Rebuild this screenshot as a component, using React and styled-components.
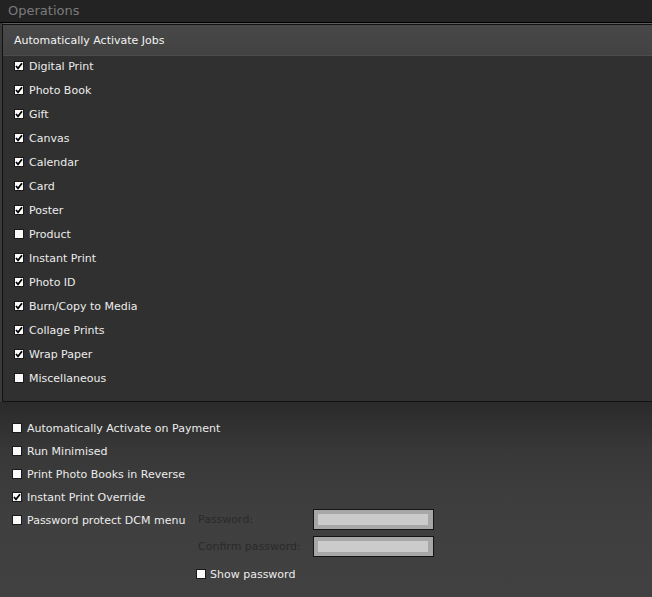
import React from "react";
import styled, { createGlobalStyle } from "styled-components";

const Global = createGlobalStyle`
  html, body { margin: 0; padding: 0; background: #3a3a3a; }
  body { font-family: "DejaVu Sans", Verdana, sans-serif; }
  #root { min-height: 100vh; display: flex; flex-direction: column; }
`;

const Page = styled.div`
  flex: 1;
  display: flex;
  flex-direction: column;
  min-height: 597px;
`;

const TitleBar = styled.div`
  height: 22px;
  background: #232323;
  color: #7b7b7b;
  font-size: 13px;
  line-height: 22px;
  padding-left: 8px;
  border-bottom: 1px solid #000;
  box-sizing: content-box;
`;

const Panel = styled.section`
  margin-left: 2px;
  border-top: 1px solid #5c5c5c;
  border-left: 1px solid #121212;
  border-bottom: 1px solid #121212;
  background: #303030;
`;

const PanelHeader = styled.div`
  height: 30px;
  border-top: 1px solid #121212;
  border-bottom: 1px solid #4d4d4d;
  background: linear-gradient(#484848, #424242);
  color: #f2f2f2;
  font-size: 11px;
  display: flex;
  align-items: center;
  padding-left: 11px;
`;

const JobList = styled.div`
  display: flex;
  flex-direction: column;
  gap: 4px;
  padding: 0 0 13px 11px;
`;

const Row = styled.label`
  height: 20px;
  display: flex;
  align-items: center;
  gap: ${(p) => p.$gap || 5}px;
  color: #ececec;
  font-size: 11px;
  white-space: nowrap;
`;

const Box = styled.span`
  width: 10px;
  height: 10px;
  box-sizing: border-box;
  background: #fafafa;
  border: 1px solid #1a1a1a;
  display: inline-flex;
  align-items: center;
  justify-content: center;
  flex: none;
`;

const Check = ({ on }) => (
  <Box>
    {on && (
      <svg width="8" height="8" viewBox="0 0 8 8">
        <path d="M1 4 L3 6.3 L7 1.2" fill="none" stroke="#000" strokeWidth="1.7" />
      </svg>
    )}
  </Box>
);

const Lower = styled.div`
  flex: 1;
  background: linear-gradient(#2a2a2a, #383838 25%, #3f3f3f 60%, #414141);
  padding: 16px 0 0 12px;
  display: flex;
  flex-direction: column;
  gap: 3px;
`;

const PasswordRow = styled.div`
  display: flex;
  align-items: flex-start;
`;

const PasswordLead = styled.div`
  width: 186px;
  flex: none;
`;

const PasswordGrid = styled.div`
  margin-top: -1px;
  display: grid;
  grid-template-columns: 115px 121px;
  grid-auto-rows: 21px;
  row-gap: 6px;
  align-items: center;
`;

const FieldLabel = styled.span`
  color: #2a2a2a;
  font-size: 11px;
  white-space: nowrap;
`;

const Input = styled.div`
  height: 21px;
  box-sizing: border-box;
  border: 1px solid #141414;
  background: #cbcbcb;
  box-shadow: inset 4px 4px 0 #a7a7a7, inset -5px -4px 0 #a7a7a7;
`;

const ShowRow = styled.div`
  grid-column: 1 / span 2;
  margin-left: -2px;
  height: 21px;
  display: flex;
  align-items: flex-end;
`;

const jobs = [
  ["Digital Print", true],
  ["Photo Book", true],
  ["Gift", true],
  ["Canvas", true],
  ["Calendar", true],
  ["Card", true],
  ["Poster", true],
  ["Product", false],
  ["Instant Print", true],
  ["Photo ID", true],
  ["Burn/Copy to Media", true],
  ["Collage Prints", true],
  ["Wrap Paper", true],
  ["Miscellaneous", false],
];

const options = [
  ["Automatically Activate on Payment", false],
  ["Run Minimised", false],
  ["Print Photo Books in Reverse", false],
  ["Instant Print Override", true],
];

export default function App() {
  return (
    <Page>
      <Global />
      <TitleBar>Operations</TitleBar>
      <Panel>
        <PanelHeader>Automatically Activate Jobs</PanelHeader>
        <JobList>
          {jobs.map(([name, on]) => (
            <Row key={name}>
              <Check on={on} />
              {name}
            </Row>
          ))}
        </JobList>
      </Panel>
      <Lower>
        {options.map(([name, on]) => (
          <Row key={name} $gap={5}>
            <Check on={on} />
            {name}
          </Row>
        ))}
        <PasswordRow>
          <PasswordLead>
            <Row $gap={5}>
              <Check on={false} />
              Password protect DCM menu
            </Row>
          </PasswordLead>
          <PasswordGrid>
            <FieldLabel>Password:</FieldLabel>
            <Input />
            <FieldLabel>Confirm password:</FieldLabel>
            <Input />
            <ShowRow>
              <Row $gap={4}>
                <Check on={false} />
                Show password
              </Row>
            </ShowRow>
          </PasswordGrid>
        </PasswordRow>
      </Lower>
    </Page>
  );
}
